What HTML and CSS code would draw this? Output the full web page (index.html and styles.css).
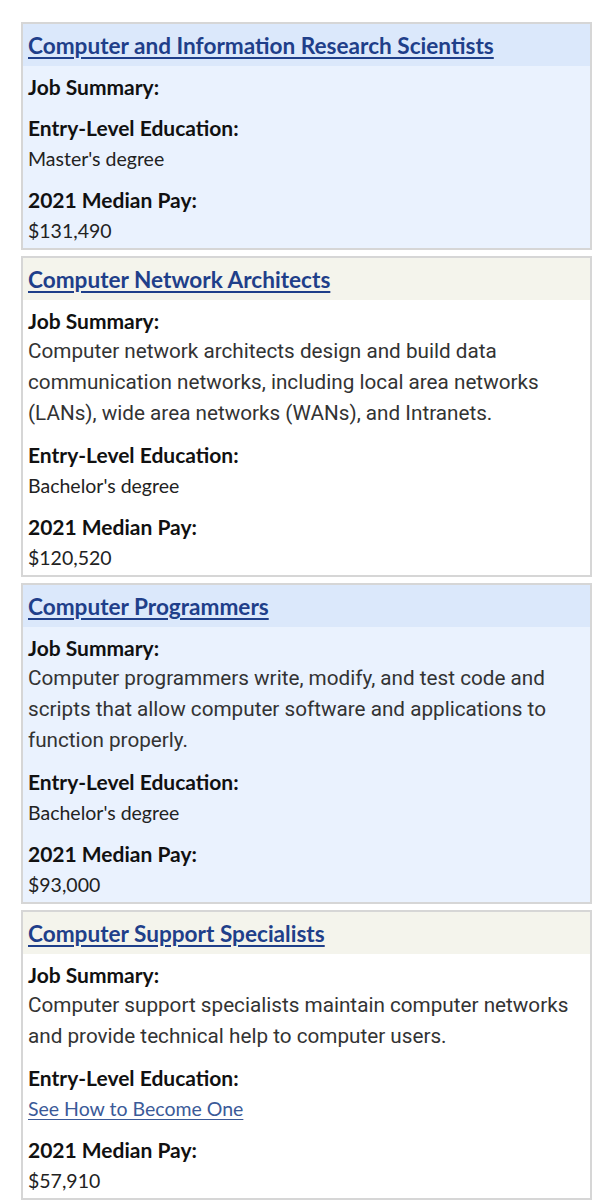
FILE: index.html
```html
<!DOCTYPE html>
<html lang="en">
<head>
<meta charset="utf-8">
<title>Occupations</title>
<link rel="stylesheet" href="styles.css">
</head>
<body>
<div class="list">
  <section class="card card-blue">
    <h3 class="card-title"><a href="#">Computer and Information Research Scientists</a></h3>
    <dl class="card-body">
      <dt>Job Summary:</dt>
      <dd class="summary"></dd>
      <dt>Entry-Level Education:</dt>
      <dd>Master's degree</dd>
      <dt>2021 Median Pay:</dt>
      <dd>$131,490</dd>
    </dl>
  </section>
  <section class="card card-beige">
    <h3 class="card-title"><a href="#">Computer Network Architects</a></h3>
    <dl class="card-body">
      <dt>Job Summary:</dt>
      <dd class="summary">Computer network architects design and build data communication networks, including local area networks (LANs), wide area networks (WANs), and Intranets.</dd>
      <dt>Entry-Level Education:</dt>
      <dd>Bachelor's degree</dd>
      <dt>2021 Median Pay:</dt>
      <dd>$120,520</dd>
    </dl>
  </section>
  <section class="card card-blue">
    <h3 class="card-title"><a href="#">Computer Programmers</a></h3>
    <dl class="card-body">
      <dt>Job Summary:</dt>
      <dd class="summary">Computer programmers write, modify, and test code and scripts that allow computer software and applications to function properly.</dd>
      <dt>Entry-Level Education:</dt>
      <dd>Bachelor's degree</dd>
      <dt>2021 Median Pay:</dt>
      <dd>$93,000</dd>
    </dl>
  </section>
  <section class="card card-beige">
    <h3 class="card-title"><a href="#">Computer Support Specialists</a></h3>
    <dl class="card-body">
      <dt>Job Summary:</dt>
      <dd class="summary">Computer support specialists maintain computer networks and provide technical help to computer users.</dd>
      <dt>Entry-Level Education:</dt>
      <dd><a class="plain-link" href="#">See How to Become One</a></dd>
      <dt>2021 Median Pay:</dt>
      <dd>$57,910</dd>
    </dl>
  </section>
</div>
</body>
</html>
```
FILE: styles.css
```css
* { box-sizing: border-box; }
html, body { margin: 0; padding: 0; background: #fff; }
body { font-family: Lato, "Liberation Sans", sans-serif; color: #111; }

.list {
  display: flex;
  flex-direction: column;
  gap: 6px;
  padding: 22px 20px 0 21px;
}

.card {
  border: 2px solid #d6d6d6;
}
.card-blue { background: #eaf2fe; }
.card-blue .card-title { background: #dbe8fb; }
.card-beige { background: #fff; }
.card-beige .card-title { background: #f4f4ec; }

.card-title {
  margin: 0;
  height: 42px;
  display: flex;
  align-items: center;
  padding: 0 5px;
  font-size: 22.6px;
  font-weight: 700;
}
.card-title a {
  color: #1f3f8a;
  text-decoration: underline;
  text-decoration-thickness: 2px;
  text-underline-offset: 3px;
}

.card-body {
  margin: 0;
  padding: 5px 5px 2px 5px;
  font-size: 19.5px;
  line-height: 31px;
}
.card-body dt {
  font-weight: 700;
  color: #111;
  font-size: 21px;
}
.card-body dd {
  margin: 0 0 10px 0;
  color: #222;
}
.card-body dd:last-child { margin-bottom: 0; }
.card-body .summary {
  font-family: Roboto, "Liberation Sans", sans-serif;
  color: #333;
  font-size: 20.7px;
}
.plain-link {
  color: #3b5a98;
  text-decoration: underline;
  text-decoration-thickness: 1px;
  text-underline-offset: 3px;
}
```
